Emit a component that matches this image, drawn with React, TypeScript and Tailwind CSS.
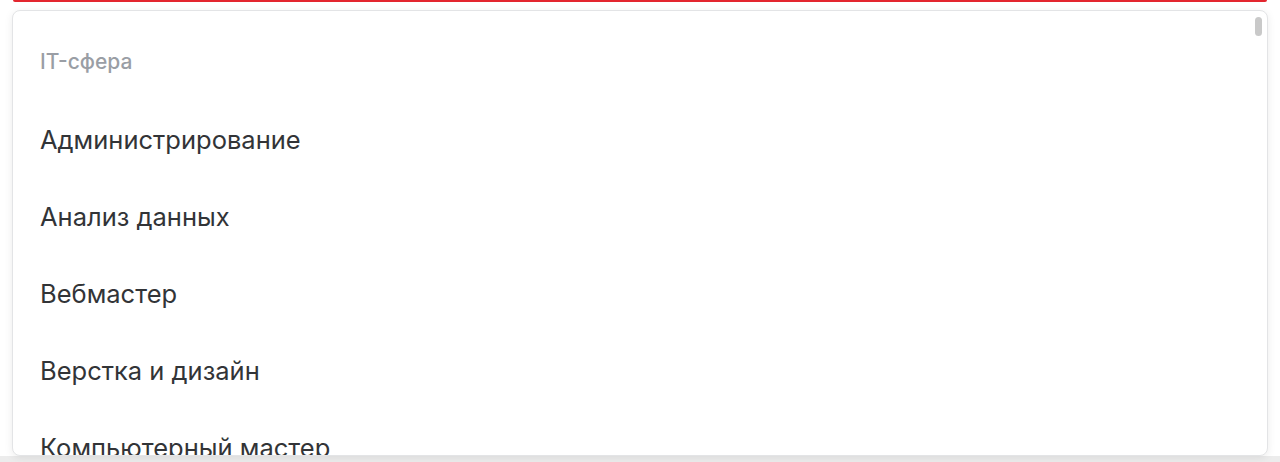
const items = [
  "Администрирование",
  "Анализ данных",
  "Вебмастер",
  "Верстка и дизайн",
  "Компьютерный мастер",
];

export default function App() {
  return (
    <div className="h-[462px] w-[1280px] overflow-hidden bg-white flex flex-col font-['Inter','Noto_Sans',sans-serif]">
      <div className="mx-[13px] h-[2px] rounded-b-[3px] bg-[#e3262f]" />
      <div className="relative mx-[12px] mt-[8px] h-[446px] shrink-0 overflow-hidden rounded-[8px] border border-[#e3e4e6] bg-white shadow-[0_2px_8px_rgba(0,0,0,0.08)]">
        <div className="absolute right-[5px] top-[6px] h-[19px] w-[7px] rounded-full bg-[#c9c9c9]" />
        <div className="px-[27px] pt-[38px] pb-[27px] text-[21px] leading-[26px] font-medium text-[#9a9ea5]">
          IT-сфера
        </div>
        {items.map((item) => (
          <div key={item} className="flex h-[77px] items-center px-[27px] text-[25.5px] text-[#323437]">
            {item}
          </div>
        ))}
      </div>
      <div className="flex-1 bg-[#ececec]" />
    </div>
  );
}
